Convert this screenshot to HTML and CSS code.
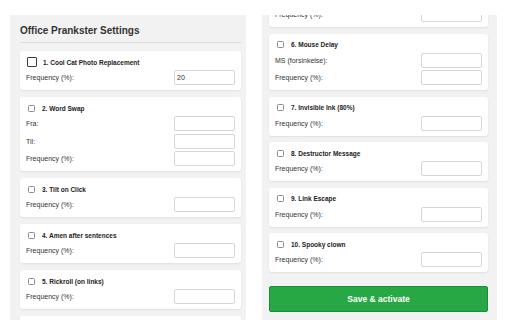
FILE: index.html
```html
<!DOCTYPE html>
<html lang="en">
<head>
<meta charset="UTF-8">
<title>Office Prankster Settings</title>
<link rel="stylesheet" href="styles.css">
</head>
<body>

<div class="page">

  <!-- top of the settings list -->
  <section class="panel panel-left">
    <h1 class="title">Office Prankster Settings</h1>
    <div class="cards">

      <div class="card">
        <div class="card-head">
          <input type="checkbox" class="check check-focus">
          <span class="card-name">1. Cool Cat Photo Replacement</span>
        </div>
        <div class="row">
          <label>Frequency (%):</label>
          <input type="text" class="field" value="20">
        </div>
      </div>

      <div class="card">
        <div class="card-head">
          <input type="checkbox" class="check">
          <span class="card-name">2. Word Swap</span>
        </div>
        <div class="row">
          <label>Fra:</label>
          <input type="text" class="field">
        </div>
        <div class="row">
          <label>Til:</label>
          <input type="text" class="field">
        </div>
        <div class="row">
          <label>Frequency (%):</label>
          <input type="text" class="field">
        </div>
      </div>

      <div class="card">
        <div class="card-head">
          <input type="checkbox" class="check">
          <span class="card-name">3. Tilt on Click</span>
        </div>
        <div class="row">
          <label>Frequency (%):</label>
          <input type="text" class="field">
        </div>
      </div>

      <div class="card">
        <div class="card-head">
          <input type="checkbox" class="check">
          <span class="card-name">4. Amen after sentences</span>
        </div>
        <div class="row">
          <label>Frequency (%):</label>
          <input type="text" class="field">
        </div>
      </div>

      <div class="card">
        <div class="card-head">
          <input type="checkbox" class="check">
          <span class="card-name">5. Rickroll (on links)</span>
        </div>
        <div class="row">
          <label>Frequency (%):</label>
          <input type="text" class="field">
        </div>
      </div>

      <div class="card">
        <div class="card-head">
          <input type="checkbox" class="check">
          <span class="card-name">6. Mouse Delay</span>
        </div>
        <div class="row">
          <label>MS (forsinkelse):</label>
          <input type="text" class="field">
        </div>
      </div>

    </div>
  </section>

  <!-- same list, scrolled to the bottom -->
  <section class="panel panel-right">
    <div class="cards cards-scrolled">

      <div class="card">
        <div class="card-head">
          <input type="checkbox" class="check">
          <span class="card-name">5. Rickroll (on links)</span>
        </div>
        <div class="row">
          <label>Frequency (%):</label>
          <input type="text" class="field">
        </div>
      </div>

      <div class="card">
        <div class="card-head">
          <input type="checkbox" class="check">
          <span class="card-name">6. Mouse Delay</span>
        </div>
        <div class="row">
          <label>MS (forsinkelse):</label>
          <input type="text" class="field">
        </div>
        <div class="row">
          <label>Frequency (%):</label>
          <input type="text" class="field">
        </div>
      </div>

      <div class="card">
        <div class="card-head">
          <input type="checkbox" class="check">
          <span class="card-name">7. Invisible Ink (80%)</span>
        </div>
        <div class="row">
          <label>Frequency (%):</label>
          <input type="text" class="field">
        </div>
      </div>

      <div class="card">
        <div class="card-head">
          <input type="checkbox" class="check">
          <span class="card-name">8. Destructor Message</span>
        </div>
        <div class="row">
          <label>Frequency (%):</label>
          <input type="text" class="field">
        </div>
      </div>

      <div class="card">
        <div class="card-head">
          <input type="checkbox" class="check">
          <span class="card-name">9. Link Escape</span>
        </div>
        <div class="row">
          <label>Frequency (%):</label>
          <input type="text" class="field">
        </div>
      </div>

      <div class="card">
        <div class="card-head">
          <input type="checkbox" class="check">
          <span class="card-name">10. Spooky clown</span>
        </div>
        <div class="row">
          <label>Frequency (%):</label>
          <input type="text" class="field">
        </div>
      </div>

      <button class="save-btn">Save &amp; activate</button>

    </div>
  </section>

</div>

</body>
</html>
```

FILE: styles.css
```css
html, body {
    margin: 0;
    padding: 0;
    height: 100%;
    overflow: hidden;
    background: #fff;
    font-family: "Liberation Sans", Arial, sans-serif;
    color: #333;
}
.page {
    display: flex;
    gap: 16px;
    height: 100%;
    box-sizing: border-box;
    padding: 15px 15px 0 10px;
}
.panel {
    background-color: #f2f2f2;
    overflow: hidden;
    box-sizing: border-box;
}
.panel-left {
    flex: 0 0 236px;
    padding: 10px 5px 0 10px;
}
.panel-right {
    flex: 0 0 235px;
    padding: 0 9px 0 7px;
}
.title {
    margin: 0 0 8px;
    padding-bottom: 5px;
    font-size: 10px;
    line-height: 12px;
    font-weight: bold;
    color: #333;
    border-bottom: 1px solid #dcdcdc;
}
.cards {
    display: flex;
    flex-direction: column;
    gap: 7px;
}
.cards-scrolled {
    gap: 6.5px;
    margin-top: -27px;
}
.card {
    display: flex;
    flex-direction: column;
    gap: 2.5px;
    padding: 6px 6px 5px 6px;
    background-color: #fff;
    border-radius: 3px;
    box-shadow: 0 1px 2px rgba(0, 0, 0, 0.08);
}
.card-head {
    display: flex;
    align-items: center;
    height: 10.5px;
}
.check {
    -webkit-appearance: none;
    appearance: none;
    width: 7px;
    height: 7px;
    margin: 0 7px 0 2px;
    border: 1px solid #8a8a8a;
    border-radius: 1.5px;
    background: #fff;
    box-sizing: border-box;
}
.check-focus {
    width: 10px;
    height: 10px;
    margin: 0 6px 0 1px;
    border: 1px solid #3a3a3a;
    border-radius: 1px;
}
.card-name {
    font-size: 6.5px;
    font-weight: bold;
    color: #222;
}
.row {
    display: flex;
    align-items: center;
    justify-content: space-between;
    height: 15px;
}
.row label {
    font-size: 7px;
    color: #333;
}
.field {
    width: 61px;
    height: 15px;
    box-sizing: border-box;
    padding: 0 2px;
    font-family: "Liberation Sans", Arial, sans-serif;
    font-size: 7px;
    color: #333;
    border: 1px solid #d6d6d6;
    border-radius: 2px;
    outline: none;
}
.save-btn {
    margin-top: 7px;
    height: 26px;
    width: 100%;
    font-family: "Liberation Sans", Arial, sans-serif;
    font-size: 8.5px;
    font-weight: bold;
    color: #fff;
    background-color: #28a745;
    border: 1px solid #1f8a38;
    border-radius: 2px;
    cursor: pointer;
}
```
